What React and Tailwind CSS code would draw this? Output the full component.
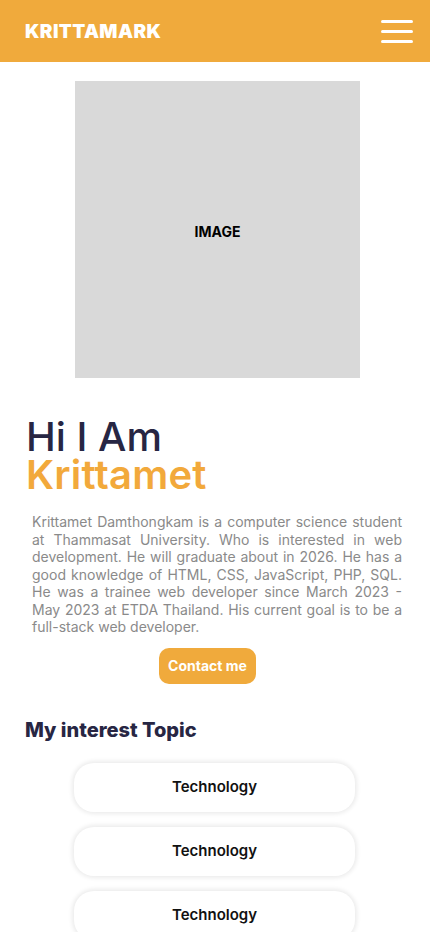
import React from "react";

const topics = ["Technology", "Technology", "Technology"];

export default function App() {
  return (
    <div className="min-h-[932px] bg-white font-['Inter',sans-serif]">
      {/* Header */}
      <header className="flex h-[62px] items-center justify-between bg-[#F0AA3C] pl-[25px] pr-[17px]">
        <span className="pt-[2px] text-[19px] font-black tracking-[0.02em] text-white">KRITTAMARK</span>
        <button className="flex w-[32px] flex-col gap-[7px]">
          <span className="h-[3px] w-full rounded-full bg-white" />
          <span className="h-[3px] w-full rounded-full bg-white" />
          <span className="h-[3px] w-full rounded-full bg-white" />
        </button>
      </header>

      {/* Image placeholder */}
      <div className="mt-[19px] flex justify-center pl-[5px]">
        <div className="flex h-[297px] w-[285px] items-center justify-center bg-[#D9D9D9]">
          <span className="pt-[3px] text-[14px] font-bold text-black">IMAGE</span>
        </div>
      </div>

      {/* Intro */}
      <div className="mt-[40px] pl-[26px]">
        <h1 className="text-[40px] font-medium leading-[38px] text-[#272643]">Hi I Am</h1>
        <h2 className="text-[40px] font-semibold leading-[38px] tracking-[0.005em] text-[#F2A93B]">Krittamet</h2>
      </div>

      <p className="mx-[28px] mt-[19px] pl-[4px] text-justify text-[14px] leading-[17.5px] text-[#8A8A8A]">
        Krittamet Damthongkam is a computer science student at Thammasat University. Who is interested in web
        development. He will graduate about in 2026. He has a good knowledge of HTML, CSS, JavaScript, PHP, SQL.
        He was a trainee web developer since March 2023 - May 2023 at ETDA Thailand. His current goal is to be a
        full-stack web developer.
      </p>

      <div className="mt-[12px] flex justify-center pr-[15px]">
        <button className="h-[36px] w-[97px] rounded-[10px] bg-[#F0AA3C] text-[14px] font-bold text-white">
          Contact me
        </button>
      </div>

      {/* Topics */}
      <h3 className="mt-[31px] pl-[25px] text-[20px] font-extrabold text-[#272643]">My interest Topic</h3>

      <div className="mt-[18px] flex flex-col items-center gap-[15px] pr-[1px]">
        {topics.map((t, i) => (
          <div
            key={i}
            className="flex h-[49px] w-[281px] items-center justify-center rounded-[20px] bg-white shadow-[0_0_4px_2px_rgba(0,0,0,0.08)]"
          >
            <span className="text-[15px] font-semibold text-[#111]">{t}</span>
          </div>
        ))}
      </div>
    </div>
  );
}
